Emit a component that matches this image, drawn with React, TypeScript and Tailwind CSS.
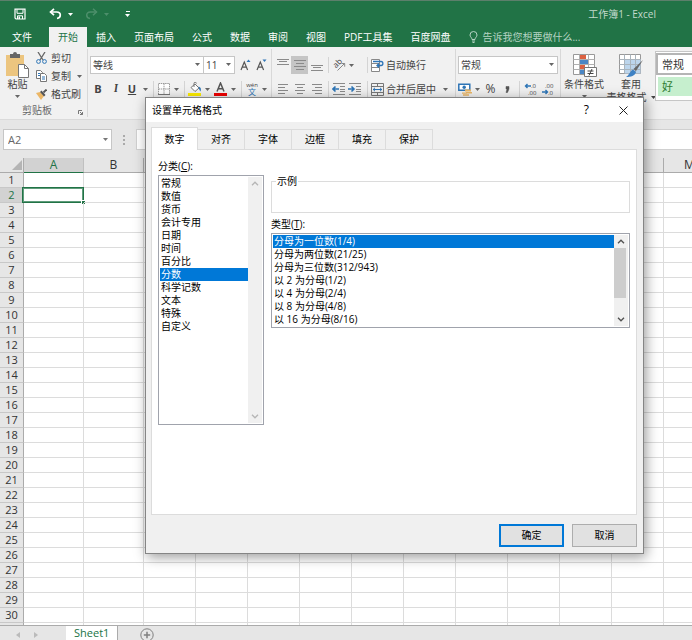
import { useState } from "react";
import type { ReactNode } from "react";

const menus = ["开始", "插入", "页面布局", "公式", "数据", "审阅", "视图", "PDF工具集", "百度网盘"];
const dialogTabs = ["数字", "对齐", "字体", "边框", "填充", "保护"];
const categories = ["常规", "数值", "货币", "会计专用", "日期", "时间", "百分比", "分数", "科学记数", "文本", "特殊", "自定义"];
const fractionTypes = [
  "分母为一位数(1/4)",
  "分母为两位数(21/25)",
  "分母为三位数(312/943)",
  "以 2 为分母(1/2)",
  "以 4 为分母(2/4)",
  "以 8 为分母(4/8)",
  "以 16 为分母(8/16)",
];
const columns = ["A", "B", "C", "D", "E", "F", "G", "H", "I", "J", "K", "L", "M"];
const rows = Array.from({ length: 31 }, (_, i) => i + 1);

const Caret = () => (
  <svg width="5" height="3" viewBox="0 0 5 3" className="shrink-0">
    <path d="M0 0h5L2.5 3z" fill="currentColor" />
  </svg>
);

const MoreButton = ({ label }: { label: string }) => (
  <button aria-label={label} className="flex w-2.5 h-full items-center justify-center text-[#666]">
    <Caret />
  </button>
);

const Sep = () => <div className="mx-[3px] h-4 w-px shrink-0 bg-[#d4d4d4]" />;

const IconButton = ({ label, wide, active, children }: { label: string; wide?: boolean; active?: boolean; children: ReactNode }) => (
  <button
    aria-label={label}
    className={`flex h-full shrink-0 items-center justify-center ${wide ? "w-[17px]" : "w-3.5"} ${active ? "bg-[#c5c5c5]" : ""}`}
  >
    {children}
  </button>
);

const Picker = ({ label, value, width }: { label: string; value: string; width: string }) => (
  <div className={`relative h-[18px] shrink-0 ${width}`}>
    <select aria-label={label} className="h-full w-full appearance-none rounded-none border border-[#c6c6c6] bg-white pl-0.5 text-[10px] leading-4 text-[#444]">
      <option>{value}</option>
    </select>
    <span className="pointer-events-none absolute right-1 top-[7px] text-[#666]">
      <Caret />
    </span>
  </div>
);

// rows: [x1, x2, y]
const Lines = ({ rows, h = 12 }: { rows: number[][]; h?: number }) => (
  <svg width="12" height={h} viewBox={`0 0 12 ${h}`} stroke="#8a8a8a" strokeWidth="1">
    {rows.map(([a, b, y]) => (
      <path key={y} d={`M${a} ${y}.5H${b}`} />
    ))}
  </svg>
);

const IndentIcon = ({ flip }: { flip?: boolean }) => (
  <svg width="14" height="12" viewBox="0 0 14 12" fill="none">
    <path d="M1 .5h12M8 3.5h5M8 6.5h5M8 8.5h5M1 11.5h12" stroke="#8a8a8a" />
    <path d={flip ? "M0 6h5M3.5 3.5L6 6l-2.5 2.5" : "M7 6H2M3.5 3.5L1 6l2.5 2.5"} stroke="#2e75b6" strokeWidth="1.6" />
  </svg>
);

const DecimalIcon = ({ less }: { less?: boolean }) => (
  <svg width="13" height="12" viewBox="0 0 13 12" fontSize="6" fontFamily="Open Sans" fill="#444" overflow="visible">
    <text x={less ? 3 : 6} y="5">{less ? ".00" : ".0"}</text>
    <text x={less ? 6 : 3} y="11.5">{less ? ".0" : ".00"}</text>
    <path d={less ? "M0 9h5M3.5 7L5.5 9l-2 2" : "M6 3H1M2.500 1L.5 3l2 2"} stroke="#2e75b6" strokeWidth="1.4" fill="none" />
  </svg>
);

const TitleBar = () => (
  <div className="flex h-[27px] items-center border-t border-[#5c7f6b] pl-3.5 pr-9 text-white">
    <button aria-label="保存">
      <svg width="12" height="12" viewBox="0 0 12 12" fill="none" stroke="white">
        <path d="M1 1.200h10v9.800H2L1 10z" strokeWidth="1.200" />
        <path d="M3 1.500v3.800h6V1.500M3.500 11V7.800h5V11" />
        <path d="M4.500 8.500h1.500V11H4.500z" fill="white" stroke="none" />
      </svg>
    </button>
    <button aria-label="撤消" className="ml-[23px]">
      <svg width="13" height="12" viewBox="0 0 13 12" fill="none" stroke="white" strokeWidth="1.700">
        <path d="M1.500 4h6.200c5 0 4.500 6 .3 6.500" />
        <path d="M5 .8L1.500 4 5 7.200" />
      </svg>
    </button>
    <button aria-label="撤消列表" className="ml-1.5"><Caret /></button>
    <button aria-label="恢复" className="ml-3 text-[#4d8f6b]">
      <svg width="13" height="12" viewBox="0 0 13 12" fill="none" stroke="currentColor" strokeWidth="1.500">
        <path d="M11.500 4H5.300C.3 4 .8 10 5 10.500" />
        <path d="M8 .8L11.500 4 8 7.200" />
      </svg>
    </button>
    <button aria-label="恢复列表" className="ml-1.5 text-[#4d8f6b]"><Caret /></button>
    <button aria-label="自定义快速访问工具栏" className="ml-4 flex flex-col items-center gap-0.5">
      <span className="h-px w-1 bg-white" />
      <Caret />
    </button>
    <h1 className="ml-auto text-[10px] text-[#c3dacd]">工作簿1 - Excel</h1>
  </div>
);

const MenuBar = () => (
  <nav className="flex h-5 whitespace-nowrap text-[10px] text-white">
    <button className="mr-2 pl-3 pr-[9px]">文件</button>
    {menus.map((m) => (
      <button key={m} className={`px-[9px] ${m === "开始" ? "bg-[#f1f1f1] text-[#217346]" : ""}`}>
        {m}
      </button>
    ))}
    <button className="ml-2.5 flex items-center gap-1 text-[#b5d3c3]">
      <svg width="9" height="12" viewBox="0 0 9 12" fill="none" stroke="currentColor">
        <path d="M3 8.500C3 6.500 1 6 1 4a3.500 3.500 0 0 1 7 0c0 2-2 2.500-2 4.500zM3 10h3M3.500 11.500h2" />
      </svg>
      告诉我您想要做什么...
    </button>
  </nav>
);

const ClipboardGroup = () => (
  <div className="flex w-[87px] shrink-0 flex-col">
    <div className="flex">
      <button className="flex w-[35px] flex-col items-center pt-[3px] leading-[13px]">
        <svg width="25" height="26" viewBox="0 0 25 26">
          <path d="M1 3h18v21H1z" fill="#ecc57f" />
          <path d="M5 2h3a2 2 0 0 1 4 0h3v4H5z" fill="#666" />
          <path d="M13.500 12.500h6l4 4v9h-10z" fill="white" stroke="#777" />
          <path d="M19.500 12.500v4h4" fill="none" stroke="#777" />
        </svg>
        粘贴
        <span className="mt-1 text-[#666]"><Caret /></span>
      </button>
      <div className="flex flex-col pl-px">
        <button className="flex h-[18px] items-center gap-1">
          <svg width="11" height="12" viewBox="0 0 11 12" fill="none">
            <path d="M2 0l5 8M9 0L4 8" stroke="#666" strokeWidth="1.300" />
            <circle cx="2.500" cy="9.500" r="1.900" stroke="#2e75b6" />
            <circle cx="8.500" cy="9.500" r="1.900" stroke="#2e75b6" />
          </svg>
          剪切
        </button>
        <button className="flex h-[18px] items-center gap-1">
          <svg width="11" height="12" viewBox="0 0 11 12" fill="white" stroke="#777">
            <path d="M.5.5h4l2 2v6h-6z" />
            <path d="M4.500 3.500h4l2 2v6h-6z" />
            <path d="M2 3.500h2M2 5.500h2M6 7h3M6 9h3" stroke="#2e75b6" />
          </svg>
          复制
          <span className="ml-0.5 text-[#666]"><Caret /></span>
        </button>
        <button className="flex h-[18px] items-center gap-1">
          <svg width="11" height="11" viewBox="0 0 11 11">
            <path d="M0 4l4-1 4 4-3 4z" fill="#ecb766" />
            <path d="M4 3l1.500-1.500L9.500 6 8 7.500z" fill="#555" />
            <path d="M7.500 3.500L10.500.5" stroke="#555" strokeWidth="1.800" />
          </svg>
          格式刷
        </button>
      </div>
    </div>
    <div className="mt-auto flex items-center justify-between pb-px pl-[22px] pr-1 leading-3 text-[#666]">
      剪贴板
      <button aria-label="剪贴板选项" className="pt-1">
        <svg width="5" height="5" viewBox="0 0 5 5" fill="none" stroke="#777">
          <path d="M.5 4V.5H4M2 2l2.500 2.500M4.500 2v2.500H2" />
        </svg>
      </button>
    </div>
  </div>
);

const FontGroup = () => (
  <div className="flex shrink-0 flex-col gap-1.5 border-l border-[#d8d8d8] px-0.5 pt-[7px]">
    <div className="flex h-[18px]">
      <Picker label="字体" value="等线" width="w-[114px]" />
      <Picker label="字号" value="11" width="w-8 -ml-px" />
      <div className="ml-0.5 flex">
        {["M0 3l2-2.500L4 3z", "M0 .5h4L2 3z"].map((d, i) => (
          <button key={d} className="flex w-4 items-center justify-center" aria-label={i ? "减小字号" : "增大字号"}>
            <svg width="11" height="12" viewBox="0 0 11 12">
              <path d="M1 11L4.300 3 7.600 11M2.200 8.200h4.200" fill="none" stroke="#555" strokeWidth="1.200" />
              <path d={d} transform="translate(6.500 0)" fill="#2e75b6" />
            </svg>
          </button>
        ))}
      </div>
    </div>
    <div className="flex h-[18px] items-center">
      <button className="w-4 text-[11px] font-bold">B</button>
      <button className="ml-0.5 w-4 font-serif text-[11px] font-bold italic">I</button>
      <button className="w-4 text-[11px] font-bold underline">U</button>
      <MoreButton label="下划线样式" />
      <Sep />
      <IconButton label="边框">
        <svg width="12" height="12" viewBox="0 0 12 12" fill="white" stroke="#999">
          <path d="M.5.5h11v11H.5zM6 .5v11M.5 6h11" strokeDasharray="1.500 .7" />
          <path d="M0 11.500h12" stroke="#777" />
        </svg>
      </IconButton>
      <MoreButton label="边框样式" />
      <Sep />
      <IconButton label="填充颜色">
        <svg width="14" height="14" viewBox="0 0 14 14">
          <path d="M3 5.500L7 2l4 4-4 3.500z" fill="white" stroke="#777" />
          <path d="M6 5V1.500a1.200 1.200 0 0 1 2.400 0" fill="none" stroke="#777" />
          <path d="M10.500 4.500c3 1 2.500 3 2 5-.8-1-1.500-2-2-5z" fill="#2e75b6" />
          <path d="M0 11h13v3H0z" fill="#ffef00" />
        </svg>
      </IconButton>
      <MoreButton label="选择填充颜色" />
      <button aria-label="字体颜色" className="flex w-4 justify-center">
        <svg width="13" height="14" viewBox="0 0 13 14">
          <path d="M3 9.500L6.500 1 10 9.500M4.200 6.800h4.600" fill="none" stroke="#555" strokeWidth="1.500" />
          <path d="M0 11h13v3H0z" fill="#f00000" />
        </svg>
      </button>
      <MoreButton label="选择字体颜色" />
      <Sep />
      <button aria-label="拼音指南" className="flex w-3.5 justify-center">
        <svg width="12" height="14" viewBox="0 0 12 14" textAnchor="middle" overflow="visible">
          <text x="6" y="4.500" fontSize="6" fill="#444" fontFamily="Open Sans">wén</text>
          <text x="6" y="12.500" fontSize="8" fill="#2e75b6" fontFamily="Noto Sans CJK SC">文</text>
        </svg>
      </button>
      <MoreButton label="拼音选项" />
    </div>
  </div>
);

const AlignGroup = () => (
  <div className="flex shrink-0 flex-col gap-1.5 border-l border-[#d8d8d8] pl-0.5 pr-[5px] pt-[7px]">
    <div className="flex h-[18px] items-center">
      <IconButton wide label="顶端对齐"><Lines h={16} rows={[[0, 12, 2], [2, 10, 4], [0, 12, 7]]} /></IconButton>
      <IconButton wide active label="垂直居中"><Lines rows={[[0, 12, 1], [2, 10, 4], [0, 12, 7], [2, 10, 10]]} /></IconButton>
      <IconButton wide label="底端对齐"><Lines h={16} rows={[[0, 12, 8], [2, 10, 10], [0, 12, 13]]} /></IconButton>
      <Sep />
      <IconButton label="方向">
        <svg width="13" height="12" viewBox="0 0 13 12" overflow="visible">
          <text transform="translate(3 9.500) rotate(-45)" fontSize="8" fill="#444" fontFamily="Open Sans">ab</text>
          <path d="M4.500 11.500L11.500 4.500M8.500 4.500h3.200v3.200" stroke="#888" fill="none" />
        </svg>
      </IconButton>
      <MoreButton label="方向选项" />
      <div className="w-2" />
      <Sep />
      <button className="flex items-center gap-0.5">
        <svg width="13" height="13" viewBox="0 0 13 13" fill="none">
          <path d="M.5.5h8v12h-8z" fill="white" stroke="#888" />
          <path d="M.5 4.500h8M.5 8.500h8" stroke="#888" />
          <path d="M2 2.500h8c2.500 0 2.500 4 0 4H6M8 4.500l-2 2 2 2" stroke="#2e75b6" strokeWidth="1.300" />
        </svg>
        自动换行
      </button>
    </div>
    <div className="flex h-[18px] items-center">
      <IconButton wide label="左对齐"><Lines rows={[[1, 11, 1], [1, 8, 4], [1, 11, 7], [1, 8, 10]]} /></IconButton>
      <IconButton wide label="居中"><Lines rows={[[1, 11, 1], [3, 9, 4], [1, 11, 7], [3, 9, 10]]} /></IconButton>
      <IconButton wide label="右对齐"><Lines rows={[[1, 11, 1], [4, 11, 4], [1, 11, 7], [4, 11, 10]]} /></IconButton>
      <Sep />
      <button aria-label="减少缩进量" className="w-4"><IndentIcon /></button>
      <button aria-label="增加缩进量" className="w-4"><IndentIcon flip /></button>
      <Sep />
      <button className="flex items-center gap-0.5">
        <svg width="13" height="13" viewBox="0 0 13 13" fill="none">
          <path d="M.5.5h12v12H.5zM.5 3.500h12M.5 9.500h12M6.500.5v3M6.500 9.500v3" stroke="#777" />
          <path d="M2 6.500h9M4 4.800L2.200 6.500 4 8.200M9 4.800l1.800 1.700L9 8.200" stroke="#2e75b6" />
        </svg>
        合并后居中
      </button>
      <div className="w-1" />
      <MoreButton label="合并选项" />
    </div>
  </div>
);

const NumberGroup = () => (
  <div className="flex shrink-0 flex-col gap-1.5 border-l border-[#d8d8d8] pl-0.5 pr-0.5 pt-[7px]">
    <Picker label="数字格式" value="常规" width="w-[100px]" />
    <div className="flex h-[18px] items-center">
      <IconButton label="会计数字格式">
        <svg width="14" height="13" viewBox="0 0 14 13">
          <path d="M.8 1.300h11v6H.8z" fill="white" stroke="#2e75b6" strokeWidth="1.500" />
          <circle cx="6.200" cy="4.300" r="1.700" fill="#2e75b6" />
          <path d="M7 6.500h6v2H7zM8 9h6v1.500H8zM4 9.500h5v1.200H4zM5 11.300h6v1.500H5z" fill="#ecb766" />
        </svg>
      </IconButton>
      <MoreButton label="货币选项" />
      <button aria-label="百分比样式" className="w-[17px] text-xs">%</button>
      <IconButton wide label="千位分隔样式">
        <svg width="5" height="7" viewBox="0 0 5 7"><path d="M1 .5h3v2.500L2.500 6.500H1L2 3H1z" fill="#555" stroke="#555" strokeWidth=".5" /></svg>
      </IconButton>
      <Sep />
      <IconButton wide label="增加小数位数"><DecimalIcon /></IconButton>
      <IconButton wide label="减少小数位数"><DecimalIcon less /></IconButton>
    </div>
  </div>
);

const StylesGroup = () => (
  <div className="flex min-w-[284px] shrink-0 flex-col border-l border-[#d8d8d8]">
    <div className="flex">
      <button className="flex w-[46px] flex-col items-center pt-[5px] leading-[13px]">
        <svg width="25" height="24" viewBox="0 0 25 24" fill="none">
          <path d="M1.500.5h21v20h-21z" fill="white" stroke="#999" />
          <path d="M8 1h6v5H8zM8 11h5v4H8z" fill="#dc6141" />
          <path d="M8 6h8v5H8zM8 16h4v4H8z" fill="#4a86c5" />
          <path d="M1.500 5.500h21M1.500 10.500h21M1.500 15.500h21M7.500.5v20M16.500.5v20" stroke="#b0b0b0" />
          <path d="M12.500 13.500h12v9h-12z" fill="white" stroke="#777" />
          <path d="M15.500 17h6M15.500 19.500h6M20 15l-3 6.500" stroke="#444" />
        </svg>
        条件格式
        <span className="mt-1 text-[#666]"><Caret /></span>
      </button>
      <button className="flex w-12 flex-col items-center pt-[5px] leading-[13px]">
        <svg width="25" height="24" viewBox="0 0 25 24" fill="none">
          <path d="M.5.5h21v19H.5z" fill="white" stroke="#999" />
          <path d="M6 5h15.500v14.500H6z" fill="#bcd5ec" />
          <path d="M.5 5.500h21M.5 10.500h21M.5 15.500h21M5.500.5v19M11.500.5v19M16.500.5v19" stroke="#a9b4bd" />
          <path d="M24 6l-7 11-2.500-2z" fill="#666" />
          <path d="M14 15.500l3 2.500c-1 4-5 5-10 5 3-1.500 4-6 7-7.500z" fill="#3f82c4" />
        </svg>
        套用
        <span className="flex items-center gap-1 whitespace-nowrap">表格格式<Caret /></span>
      </button>
      <div className="mt-0.5 flex h-[50px] flex-1 flex-col gap-0.5 border border-[#c6c6c6] bg-white pt-px text-[11px]">
        <button className="h-[22px] border-2 border-[#b5b5b5] pl-1 text-left leading-[17px] text-[#333]">常规</button>
        <button className="mx-0.5 h-[19px] bg-[#c6efce] pl-1 text-left leading-[17px] text-[#2f7d32]">好</button>
      </div>
    </div>
    <div className="mt-auto pb-px text-center leading-3 text-[#666]">样式</div>
  </div>
);

const FormulaBar = () => (
  <div className="flex h-[38px] shrink-0 items-start bg-[#e6e6e6] pl-[3px] pt-[9px] text-[11px]">
    <div className="relative">
      <input aria-label="名称框" defaultValue="A2" className="h-[21px] w-[109px] border border-[#c6c6c6] bg-white pl-1 text-[#666]" />
      <span className="pointer-events-none absolute right-1 top-[9px] text-[#777]"><Caret /></span>
    </div>
    <div className="flex h-[21px] w-[24px] flex-col items-center justify-center gap-0.5">
      <span className="size-0.5 bg-[#aaa]" />
      <span className="size-0.5 bg-[#aaa]" />
      <span className="size-0.5 bg-[#aaa]" />
    </div>
    <input aria-label="编辑栏" className="h-[21px] min-w-0 flex-1 border border-r-0 border-[#d0d0d0] bg-white px-1" />
  </div>
);

const Sheet = () => (
  <div className="min-h-0 flex-1 overflow-hidden bg-white">
    <table className="w-[716px] table-fixed border-separate border-spacing-0 text-center text-[11px] text-[#333]">
      <colgroup>
        <col className="w-6" />
        {columns.map((c) => (
          <col key={c} className={c < "C" ? "w-[60px]" : "w-[52px]"} />
        ))}
      </colgroup>
      <thead>
        <tr className="h-[15px]">
          <th aria-label="全选" className="border-b border-r border-[#ababab] bg-[#e6e6e6] p-0">
            <svg width="10" height="10" viewBox="0 0 10 10" className="ml-auto mr-px"><path d="M10 0v10H0z" fill="#b4b4b4" /></svg>
          </th>
          {columns.map((c) => (
            <th
              key={c}
              className={`border-b border-r p-0 text-xs leading-[14px] font-normal ${
                c === "A" ? "border-b-[#217346] border-r-[#c0c0c0] bg-[#d2d2d2] text-[#217346]" : "border-[#ababab] bg-[#e6e6e6]"
              }`}
            >
              {c}
            </th>
          ))}
        </tr>
      </thead>
      <tbody>
        {rows.map((r) => (
          <tr key={r} className="h-[15px]">
            <th
              className={`border-b border-r border-b-[#c8c8c8] p-0 leading-[14px] font-normal ${
                r === 2 ? "border-r-[#217346] bg-[#d2d2d2] text-[#217346]" : "border-r-[#ababab] bg-[#e6e6e6]"
              }`}
            >
              {r}
            </th>
            {columns.map((c) => (
              <td key={c} className="relative border-b border-r border-[#dcdcdc] p-0">
                {c === "A" && r === 2 && (
                  <div className="absolute -left-0.5 -right-px -top-px -bottom-px border border-[#217346] outline outline-[#5f9c7b] -outline-offset-2">
                    <span className="absolute -bottom-0.5 -right-0.5 size-[3px] bg-[#217346] shadow-[-1px_-1px_0_white]" />
                  </div>
                )}
              </td>
            ))}
          </tr>
        ))}
      </tbody>
    </table>
  </div>
);

const SheetTabs = () => (
  <footer className="flex h-[15px] shrink-0 overflow-hidden border-t border-[#ababab] bg-[#e6e6e6]">
    <div className="flex w-[66px] items-center gap-3.5 pl-4 pt-1 text-[#bbb]">
      <button aria-label="上一个工作表">
        <svg width="4" height="6" viewBox="0 0 4 6"><path d="M4 0v6L0 3z" fill="currentColor" /></svg>
      </button>
      <button aria-label="下一个工作表">
        <svg width="4" height="6" viewBox="0 0 4 6"><path d="M0 0v6l4-3z" fill="currentColor" /></svg>
      </button>
    </div>
    <button className="-mt-px h-4 border-r border-[#ababab] bg-white px-2 text-[11px] leading-[14px] text-[#217346]">Sheet1</button>
    <button aria-label="新工作表" className="ml-[22px] mt-0.5 h-3.5">
      <svg width="14" height="14" viewBox="0 0 14 14" fill="none" stroke="#808080">
        <circle cx="7" cy="7" r="6.200" />
        <path d="M7 3.800v6.400M3.800 7h6.400" strokeWidth="1.500" />
      </svg>
    </button>
  </footer>
);

const Chevron = ({ down, label }: { down?: boolean; label: string }) => (
  <button aria-label={label} className="flex h-[13px] items-center justify-center">
    <svg width="8" height="5" viewBox="0 0 8 5" fill="none" stroke="currentColor" strokeWidth="1.300">
      <path d={down ? "M1 .8L4 3.800 7 .8" : "M1 4.200L4 1.200 7 4.200"} />
    </svg>
  </button>
);

type ListProps = { id: string; items: string[]; value: string; onPick: (v: string) => void; thumb?: boolean; className: string };

const ListBox = ({ id, items, value, onPick, thumb, className }: ListProps) => (
  <div className={`flex border border-[#a0a3ac] bg-white p-px ${className}`}>
    <ul role="listbox" aria-labelledby={id} className="min-w-0 flex-1 leading-[13px]">
      {items.map((item) => (
        <li
          key={item}
          role="option"
          aria-selected={item === value}
          onClick={() => onPick(item)}
          className={`h-[13px] pl-px whitespace-nowrap ${item === value ? "bg-[#0078d7] text-white" : ""}`}
        >
          {item}
        </li>
      ))}
    </ul>
    <div className={`flex w-3.5 flex-col bg-[#f0f0f0] ${thumb ? "text-[#505050]" : "text-[#b5b5b5]"}`}>
      <Chevron label="向上滚动" />
      {thumb && <div className="h-[50px] w-3 bg-[#cdcdcd]" />}
      <div className="flex-1" />
      <Chevron down label="向下滚动" />
    </div>
  </div>
);

const FormatDialog = () => {
  const [tab, setTab] = useState("数字");
  const [category, setCategory] = useState("分数");
  const [fraction, setFraction] = useState(fractionTypes[0]);

  return (
    <div
      role="dialog"
      aria-labelledby="dialog-title"
      className="absolute left-[145px] top-[97px] w-[499px] border border-[#858585] bg-[#f0f0f0] text-[10px] text-black shadow-[2px_3px_12px_rgba(0,0,0,0.4)]"
    >
      <div className="flex h-6 items-center bg-white pl-1.5 pr-[15px]">
        <h2 id="dialog-title">设置单元格格式</h2>
        <button aria-label="帮助" className="ml-auto mr-[30px] text-xs">?</button>
        <button aria-label="关闭">
          <svg width="9" height="9" viewBox="0 0 9 9" stroke="#222"><path d="M.5.5l8 8M8.500.5l-8 8" /></svg>
        </button>
      </div>
      <div className="pb-1.5 pl-[5px] pr-1.5 pt-[5px]">
        <div role="tablist" className="flex h-[22px] items-end">
          {dialogTabs.map((t) => (
            <button
              key={t}
              role="tab"
              aria-selected={t === tab}
              onClick={() => setTab(t)}
              className={`w-[47px] border-r border-t border-[#dcdcdc] ${
                t === tab ? "relative -mb-px h-[23px] border-l bg-white" : "h-5 bg-[#f0f0f0]"
              }`}
            >
              {t}
            </button>
          ))}
        </div>
        <div role="tabpanel" className="flex h-[366px] gap-[7px] border border-[#dcdcdc] bg-white pl-1.5 pr-1.5 pt-[9px]">
          <div className="w-[106px]">
            <div id="category-label" className="mb-px h-[15px] leading-[15px]">分类(<u>C</u>):</div>
            <ListBox id="category-label" items={categories} value={category} onPick={setCategory} className="h-[250px]" />
          </div>
          <div className="flex-1 pt-4">
            <fieldset className="h-[38px] border border-[#dcdcdc] pl-1">
              <legend className="px-px leading-[13px]">示例</legend>
            </fieldset>
            <div id="type-label" className="mb-px mt-1 h-[15px] leading-[15px]">类型(<u>T</u>):</div>
            <ListBox id="type-label" items={fractionTypes} value={fraction} onPick={setFraction} thumb className="h-[95px]" />
          </div>
        </div>
        <div className="mt-[9px] flex justify-end gap-2">
          <button className="h-[23px] w-[65px] border-2 border-[#0078d7] bg-[#e1e1e1]">确定</button>
          <button className="h-[23px] w-[65px] border border-[#adadad] bg-[#e1e1e1]">取消</button>
        </div>
      </div>
    </div>
  );
};

export default function App() {
  return (
    <div className="relative flex h-screen flex-col overflow-hidden bg-[#e6e6e6] font-['Open_Sans','Noto_Sans_CJK_SC',sans-serif]">
      <header className="shrink-0 bg-[#217346]">
        <TitleBar />
        <MenuBar />
      </header>
      <div className="flex h-[73px] shrink-0 overflow-hidden border-b border-[#dadada] bg-[#f1f1f1] py-0.5 text-[10px] text-[#444]">
        <ClipboardGroup />
        <FontGroup />
        <AlignGroup />
        <NumberGroup />
        <StylesGroup />
      </div>
      <FormulaBar />
      <Sheet />
      <SheetTabs />
      <FormatDialog />
    </div>
  );
}
